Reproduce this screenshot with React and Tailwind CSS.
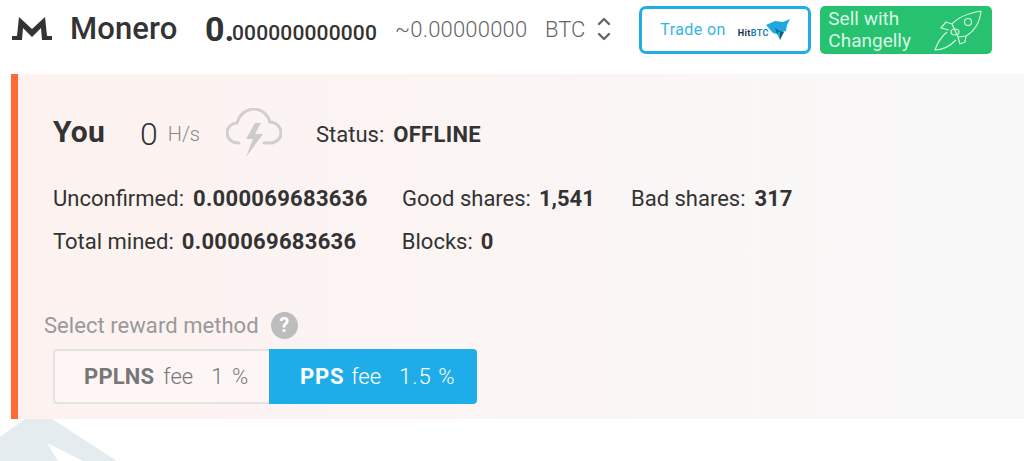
import React from 'react';

const MoneroLogo = () => (
    <svg width="42" height="26" viewBox="0 0 42 26" fill="#333">
        <path d="M8 1 L21 13 L34 1 L36 20 L41 20 L41 24 L31 24 L30 12 L21 21 L12 12 L11 24 L1 24 L1 20 L6 20 Z" />
    </svg>
);

const HitBtcLogo = () => (
    <span className="flex items-end ml-[12px]">
        <span className="text-[9px] leading-none font-bold text-[#14304d] tracking-[0.4px] mb-[3px]">
            Hit<span className="text-[#1f7fb0]">BTC</span>
        </span>
        <svg width="24" height="22" viewBox="0 0 24 22" className="-ml-[3px]">
            <path d="M0 6 L9 2 L17 3 L24 0 L21 6 L20 12 L16 13 L14 21 L11 15 L7 14 Z" fill="#1fa9de" />
            <path d="M9 9 L14 12 L11 15 Z" fill="#0f6fa3" />
            <path d="M14 12 L18 13 L14 21 Z" fill="#14587f" />
        </svg>
    </span>
);

const Rocket = () => (
    <svg width="48" height="41" viewBox="0 0 48 41" fill="none" stroke="#d5f3e1" strokeWidth="1.2" strokeLinejoin="round">
        <path d="M18 14 C24 7 36 3 47 1 C46 11 42 20 32 26 L24 27 Z" />
        <circle cx="34" cy="12" r="3.5" />
        <path d="M18 14 L12 12 L7 18 L15 20" />
        <path d="M32 26 L31 32 L26 34 L24 27" />
        <ellipse cx="21" cy="22" rx="4" ry="3" />
        <path d="M13 22 C7 27 3 34 1 40 C9 40 16 36 22 30" />
    </svg>
);

const Cloud = () => (
    <svg width="56" height="50" viewBox="0 0 56 50" fill="none">
        <path
            d="M13 35 C5 35 1 30 1 25 C1 19 6 15 11 15 C13 7 20 1 28 1 C36 1 42 7 44 14 C50 14 55 19 55 25 C55 31 50 35 44 35 L38 35"
            stroke="#d0d0d0"
            strokeWidth="3"
            strokeLinecap="round"
        />
        <path d="M29 15 L20 31 L27 31 L20 49 L37 26 L29 26 L35 15 Z" fill="#cccccc" />
    </svg>
);

const Chevrons = () => (
    <svg width="14" height="26" viewBox="0 0 14 26" fill="none" stroke="#666" strokeWidth="2.4" strokeLinecap="round" strokeLinejoin="round">
        <path d="M2 8 L7 3 L12 8" />
        <path d="M2 18 L7 23 L12 18" />
    </svg>
);

const App = () => {
    return (
        <div className="relative w-[1024px] h-[461px] overflow-hidden bg-white font-['Roboto',sans-serif] text-[#333]">
            {/* header */}
            <div className="h-[74px] flex items-start">
                <div className="flex items-center h-[58px] pl-[11px]">
                    <MoneroLogo />
                    <span className="ml-[17px] text-[31px] font-medium w-[135px] tracking-[0.1px]">Monero</span>
                    <span className="font-bold text-[34px] leading-none w-[27px]">0.</span>
                    <span className="font-medium text-[21px] leading-none mt-[9px] w-[147px] tracking-[0.15px]">000000000000</span>
                    <span className="ml-[16px] text-[22px] font-light text-[#666] w-[150px] tracking-[0.2px]">~0.00000000</span>
                    <span className="text-[22px] font-light text-[#666]">BTC</span>
                    <span className="ml-[12px]"><Chevrons /></span>
                </div>
                <div className="flex gap-[9px] mt-[6px] ml-[28px]">
                    <div className="w-[172px] h-[48px] border-[3px] border-[#1fade4] rounded-[7px] flex items-center pl-[18px] text-[16px] tracking-[0.4px] text-[#35b5e5]">
                        Trade on
                        <HitBtcLogo />
                    </div>
                    <div className="w-[172px] h-[48px] bg-[#27c26f] rounded-[5px] flex items-center justify-between pl-[8px] pr-[10px] text-[#d9f5e5] text-[19px] leading-[22px]">
                        <span>Sell with<br />Changelly</span>
                        <Rocket />
                    </div>
                </div>
            </div>

            {/* you panel */}
            <div className="relative z-10 ml-[11px] h-[345px] border-l-[7px] border-[#ff6b35] bg-gradient-to-r from-[#fdf2f0] to-[#f8f8f8] text-[22px]">
                <div className="flex items-center h-[64px] pt-[28px] box-content pl-[35px]">
                    <span className="text-[30px] font-bold w-[87px] -mt-[5px] tracking-[0.2px]">You</span>
                    <span className="text-[32px] font-light">0</span>
                    <span className="ml-[10px] text-[20px] font-light text-[#888]">H/s</span>
                    <span className="ml-[26px] mt-[-2px]"><Cloud /></span>
                    <span className="ml-[34px]">Status:</span>
                    <span className="ml-[9px] font-bold tracking-[0.3px]">OFFLINE</span>
                </div>
                <div className="flex items-center h-[24px] mt-[20px] pl-[35px]">
                    <span>Unconfirmed:</span>
                    <span className="ml-[9px] font-bold w-[209px] tracking-[0.3px]">0.000069683636</span>
                    <span>Good shares:</span>
                    <span className="ml-[8px] font-bold w-[92px]">1,541</span>
                    <span>Bad shares:</span>
                    <span className="ml-[9px] font-bold">317</span>
                </div>
                <div className="flex items-center h-[24px] mt-[19px] pl-[35px]">
                    <span>Total mined:</span>
                    <span className="ml-[8px] font-bold w-[220px] tracking-[0.3px]">0.000069683636</span>
                    <span>Blocks:</span>
                    <span className="ml-[8px] font-bold">0</span>
                </div>
                <div className="flex items-center h-[28px] mt-[59px] pl-[26px] text-[#999] -translate-y-px">
                    <span className="tracking-[0.05px]">Select reward method</span>
                    <span className="ml-[12px] w-[27px] h-[27px] rounded-full bg-[#bdbdbd] text-white font-bold text-[20px] flex items-center justify-center">?</span>
                </div>
                <div className="flex h-[55px] mt-[9px] ml-[35px] w-[424px]">
                    <div className="w-[216px] border-2 border-r-0 border-[#e3e3e3] rounded-l-[4px] bg-[#fdf6f5] flex items-center pl-[29px] text-[#777]">
                        <span className="font-bold tracking-[0.2px]">PPLNS</span>
                        <span className="ml-[9px] font-light">fee</span>
                        <span className="ml-[18px] font-light tracking-[1.6px]">1 %</span>
                    </div>
                    <div className="flex-1 bg-[#1fade9] rounded-r-[4px] flex items-center pl-[31px] text-white">
                        <span className="font-bold tracking-[0.8px]">PPS</span>
                        <span className="ml-[7px] font-light">fee</span>
                        <span className="ml-[18px] font-light tracking-[1px]">1.5 %</span>
                    </div>
                </div>
            </div>

            {/* watermark behind the panel */}
            <svg className="absolute left-0 top-[415px]" width="130" height="46" viewBox="0 0 130 46">
                <path d="M0 22 L25 4 L52 4 L117 46 L83 46 L47 28 L58 46 L0 46 Z" fill="#e4ecf0" />
            </svg>
        </div>
    );
};

export default App;
